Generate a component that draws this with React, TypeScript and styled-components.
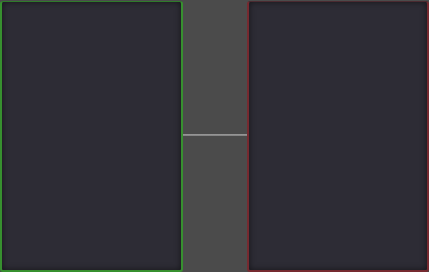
import React from 'react';
import styled, { createGlobalStyle } from 'styled-components';

const GlobalStyle = createGlobalStyle`
  html, body {
    margin: 0;
    padding: 0;
    background: #4b4b4b;
    font-family: "Liberation Sans", Arial, sans-serif;
  }
`;

const Workspace = styled.main`
  display: flex;
  align-items: stretch;
  width: 429px;
  height: 272px;
  padding: 1px 0 0 0;
  box-sizing: border-box;
  background: #4b4b4b;
`;

const Pane = styled.section<{ $accent: string; $top: string; $width?: number }>`
  ${p => (p.$width ? `width: ${p.$width}px;` : 'flex: 1;')}
  box-sizing: border-box;
  border: 2px solid ${p => p.$accent};
  border-top: 1px solid ${p => p.$top};
  border-radius: 3px;
  background: #2d2c35;
  box-shadow: inset 0 0 6px rgba(0, 0, 0, 0.55);
`;

const Gutter = styled.div`
  width: 64px;
  display: flex;
  flex-direction: column;
  justify-content: center;
  padding-bottom: 3px;
`;

const Divider = styled.div`
  height: 2px;
  background: linear-gradient(#9c9c9c, #7e7e7e);
`;

export default function App() {
  return (
    <>
      <GlobalStyle />
      <Workspace>
        <Pane $accent="#37902f" $top="#2f7a2a" $width={183} />
        <Gutter>
          <Divider />
        </Gutter>
        <Pane $accent="#762a30" $top="#4a2a30" />
      </Workspace>
    </>
  );
}
